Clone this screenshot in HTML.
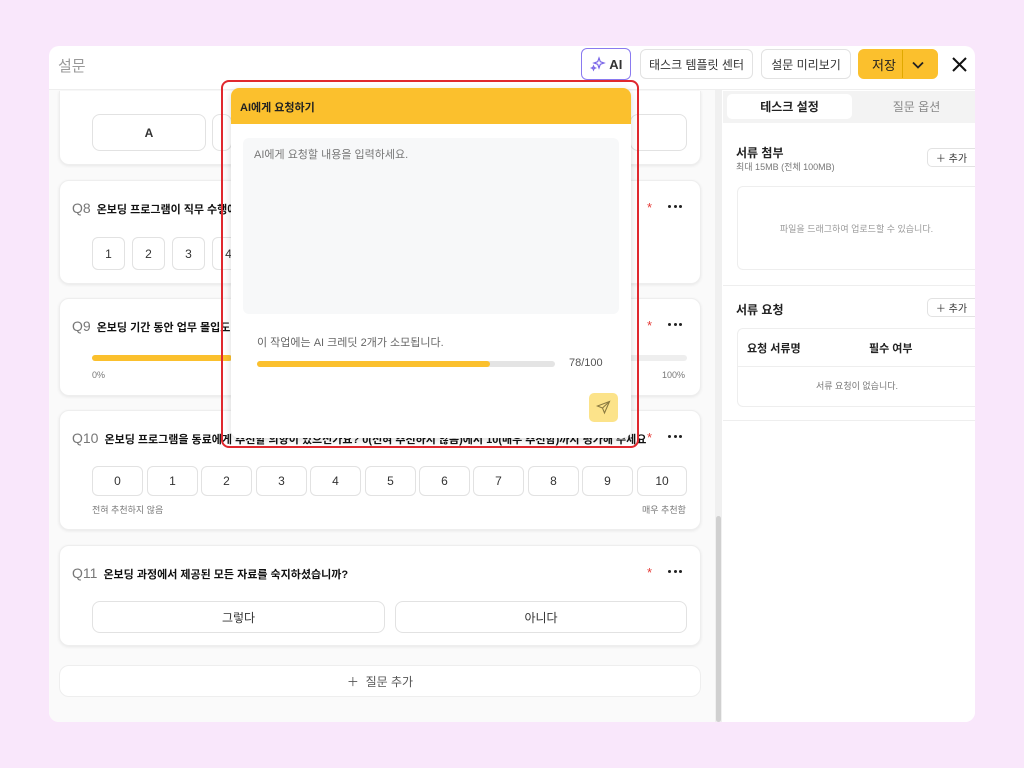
<!DOCTYPE html>
<html><head><meta charset="utf-8"><style>
*{box-sizing:border-box;margin:0;padding:0}
body{width:1024px;height:768px;background:#f9e7fb;font-family:"Liberation Sans","Noto Sans CJK KR",sans-serif;position:relative;overflow:hidden;color:#222}
.abs{position:absolute}
.card{position:absolute;background:#fff;border-radius:10px;box-shadow:0 1px 3px rgba(0,0,0,.08);border:1px solid #eee}
.btn{position:absolute;border:1px solid #e2e2e2;border-radius:6px;background:#fff;display:flex;align-items:center;justify-content:center;font-size:12px;color:#333}
.q{position:absolute;font-size:11px;font-weight:bold;color:#111;white-space:nowrap}
.q b{font-weight:normal;color:#777;font-size:14px;margin-right:6px}
.star{position:absolute;color:#e53935;font-size:13px}
.dots{position:absolute;width:14px;height:4px;display:flex;justify-content:space-between}
.dots i{width:3px;height:3px;border-radius:50%;background:#222;display:block}
.sm{position:absolute;font-size:9px;color:#777}
</style></head><body>
<div class="abs" style="left:49px;top:46px;width:926px;height:676px;background:#fff;border-radius:10px;overflow:hidden">
 <div class="abs" style="left:0;top:44px;width:666px;height:632px;background:#fafafa"></div>
 <div class="abs" style="left:666px;top:44px;width:7px;height:632px;background:#f0f0f0"></div>
 <div class="abs" style="left:667px;top:470px;width:5px;height:206px;background:#d0d0d0;border-radius:3px"></div>
 <div class="abs" style="left:673px;top:44px;width:253px;height:632px;background:#fff"></div>
 <div class="abs" style="left:0;top:43px;width:926px;height:1px;background:#eee"></div>
</div>
<div class="abs" style="left:58px;top:55px;font-size:15px;color:#999">설문</div>
<div class="btn" style="left:581px;top:48px;width:50px;height:32px;border:1.5px solid #8a7af0;font-weight:bold;font-size:13px"><svg width="16" height="16" viewBox="0 0 16 16" fill="none" stroke="#7a66e8" stroke-width="1.2"><path d="M9 2l1.3 3.7L14 7l-3.7 1.3L9 12l-1.3-3.7L4 7l3.7-1.3z"/><path d="M3.5 10l.6 1.4 1.4.6-1.4.6-.6 1.4-.6-1.4-1.4-.6 1.4-.6z"/></svg>&nbsp;AI</div>
<div class="btn" style="left:640px;top:49px;width:113px;height:30px">태스크 템플릿 센터</div>
<div class="btn" style="left:761px;top:49px;width:90px;height:30px">설문 미리보기</div>
<div class="btn" style="left:858px;top:49px;width:80px;height:30px;background:#fbc02d;border-color:#fbc02d;color:#222">
 <span style="position:absolute;left:13px;font-size:13px">저장</span>
 <span style="position:absolute;left:43px;top:0;width:1px;height:28px;background:#e0a800"></span>
 <svg class="abs" style="left:52px;top:8px" width="14" height="14" viewBox="0 0 14 14"><path d="M2 4.5l5 5 5-5" stroke="#222" stroke-width="1.8" fill="none"/></svg></div>
<svg class="abs" style="left:952px;top:57px" width="15" height="15" viewBox="0 0 15 15"><path d="M1 1l13 13M14 1L1 14" stroke="#111" stroke-width="2"/></svg>

<!-- left cards -->
<div class="card" style="left:59px;top:91px;width:642px;height:74px;border-top:none;border-radius:0 0 10px 10px"></div>
<div class="btn" style="left:92px;top:114px;width:114px;height:37px;border-radius:8px;font-weight:bold">A</div>
<div class="btn" style="left:212px;top:114px;width:20px;height:37px;border-radius:8px"></div>
<div class="btn" style="left:630px;top:114px;width:57px;height:37px;border-radius:8px"></div>

<div class="card" style="left:59px;top:180px;width:642px;height:104px"></div>
<div class="q" style="left:72px;top:200px"><b>Q8</b>온보딩 프로그램이 직무 수행에</div>
<div class="star" style="left:647px;top:200px">*</div><div class="dots" style="left:668px;top:205px"><i></i><i></i><i></i></div>
<div class="btn" style="left:92px;top:237px;width:33px;height:33px;font-size:12px">1</div>
<div class="btn" style="left:132px;top:237px;width:33px;height:33px">2</div>
<div class="btn" style="left:172px;top:237px;width:33px;height:33px">3</div>
<div class="btn" style="left:212px;top:237px;width:33px;height:33px">4</div>

<div class="card" style="left:59px;top:298px;width:642px;height:98px"></div>
<div class="q" style="left:72px;top:318px"><b>Q9</b>온보딩 기간 동안 업무 몰입도</div>
<div class="star" style="left:647px;top:318px">*</div><div class="dots" style="left:668px;top:323px"><i></i><i></i><i></i></div>
<div class="abs" style="left:92px;top:355px;width:595px;height:6px;background:#eee;border-radius:3px"></div>
<div class="abs" style="left:92px;top:355px;width:140px;height:6px;background:#fbc02d;border-radius:3px"></div>
<div class="sm" style="left:92px;top:370px">0%</div><div class="sm" style="left:662px;top:370px">100%</div>

<div class="card" style="left:59px;top:410px;width:642px;height:120px"></div>
<div class="q" style="left:72px;top:430px"><b>Q10</b>온보딩 프로그램을 동료에게 추천할 의향이 있으신가요? 0(전혀 추천하지 않음)에서 10(매우 추천함)까지 평가해 주세요</div>
<div class="star" style="left:647px;top:430px">*</div><div class="dots" style="left:668px;top:435px"><i></i><i></i><i></i></div>
<div class="btn" style="left:92px;top:466px;width:51px;height:30px">0</div>
<div class="btn" style="left:147px;top:466px;width:51px;height:30px">1</div>
<div class="btn" style="left:201px;top:466px;width:51px;height:30px">2</div>
<div class="btn" style="left:256px;top:466px;width:51px;height:30px">3</div>
<div class="btn" style="left:310px;top:466px;width:51px;height:30px">4</div>
<div class="btn" style="left:365px;top:466px;width:51px;height:30px">5</div>
<div class="btn" style="left:419px;top:466px;width:51px;height:30px">6</div>
<div class="btn" style="left:473px;top:466px;width:51px;height:30px">7</div>
<div class="btn" style="left:528px;top:466px;width:51px;height:30px">8</div>
<div class="btn" style="left:582px;top:466px;width:51px;height:30px">9</div>
<div class="btn" style="left:637px;top:466px;width:50px;height:30px">10</div>
<div class="sm" style="left:92px;top:503px">전혀 추천하지 않음</div><div class="sm" style="left:642px;top:503px">매우 추천함</div>

<div class="card" style="left:59px;top:545px;width:642px;height:101px"></div>
<div class="q" style="left:72px;top:565px"><b>Q11</b>온보딩 과정에서 제공된 모든 자료를 숙지하셨습니까?</div>
<div class="star" style="left:647px;top:565px">*</div><div class="dots" style="left:668px;top:570px"><i></i><i></i><i></i></div>
<div class="btn" style="left:92px;top:601px;width:293px;height:32px;border-radius:8px">그렇다</div>
<div class="btn" style="left:395px;top:601px;width:292px;height:32px;border-radius:8px">아니다</div>

<div class="card" style="left:59px;top:665px;width:642px;height:32px;box-shadow:none;display:flex;align-items:center;justify-content:center;font-size:12px;color:#555">＋&nbsp; 질문 추가</div>

<!-- right panel -->
<div class="abs" style="left:723px;top:91px;width:252px;height:32px;background:#f3f3f3"></div>
<div class="abs" style="left:727px;top:94px;width:125px;height:25px;background:#fff;border-radius:5px;font-size:12px;font-weight:bold;display:flex;align-items:center;justify-content:center">테스크 설정</div>
<div class="abs" style="left:858px;top:94px;width:117px;height:25px;font-size:12px;color:#888;display:flex;align-items:center;justify-content:center">질문 옵션</div>
<div class="abs" style="left:736px;top:144px;font-size:12px;font-weight:bold">서류 첨부</div>
<div class="sm" style="left:736px;top:160px;color:#777">최대 15MB (전체 100MB)</div>
<div class="btn" style="left:927px;top:148px;width:48px;height:19px;font-size:10px;border-radius:5px 0 0 5px;border-right:none">＋ 추가</div>
<div class="abs" style="left:737px;top:186px;width:238px;height:84px;border:1px solid #eee;border-right:none;border-radius:6px 0 0 6px;font-size:9px;color:#999;display:flex;align-items:center;justify-content:center">파일을 드래그하여 업로드할 수 있습니다.</div>
<div class="abs" style="left:723px;top:285px;width:252px;height:1px;background:#eee"></div>
<div class="abs" style="left:736px;top:301px;font-size:12px;font-weight:bold">서류 요청</div>
<div class="btn" style="left:927px;top:298px;width:48px;height:19px;font-size:10px;border-radius:5px 0 0 5px;border-right:none">＋ 추가</div>
<div class="abs" style="left:737px;top:328px;width:238px;height:79px;border:1px solid #eee;border-right:none;border-radius:6px 0 0 6px"></div>
<div class="abs" style="left:737px;top:366px;width:238px;height:1px;background:#eee"></div>
<div class="abs" style="left:747px;top:340px;font-size:11px;font-weight:bold">요청 서류명</div>
<div class="abs" style="left:869px;top:340px;font-size:11px;font-weight:bold">필수 여부</div>
<div class="abs" style="left:737px;top:379px;width:240px;text-align:center;font-size:9px;color:#777">서류 요청이 없습니다.</div>
<div class="abs" style="left:723px;top:420px;width:252px;height:1px;background:#eee"></div>

<!-- popup -->
<div class="abs" style="left:231px;top:88px;width:400px;height:350px;background:#fff;border-radius:8px;box-shadow:0 2px 8px rgba(0,0,0,.15)"></div>
<div class="abs" style="left:231px;top:88px;width:400px;height:36px;background:#fbc02d;border-radius:8px 8px 0 0;font-size:11px;font-weight:bold;padding:11px 0 0 9px">AI에게 요청하기</div>
<div class="abs" style="left:243px;top:138px;width:376px;height:176px;background:#f7f8f9;border-radius:6px;font-size:11px;color:#777;padding:8px 11px">AI에게 요청할 내용을 입력하세요.</div>
<div class="abs" style="left:257px;top:334px;font-size:11px;color:#666">이 작업에는 AI 크레딧 2개가 소모됩니다.</div>
<div class="abs" style="left:257px;top:361px;width:298px;height:6px;background:#e4e4e4;border-radius:3px"></div>
<div class="abs" style="left:257px;top:361px;width:233px;height:6px;background:#fbc02d;border-radius:3px"></div>
<div class="abs" style="left:569px;top:357px;font-size:11px;color:#555">78/100</div>
<div class="abs" style="left:589px;top:393px;width:29px;height:29px;background:#fce38a;border-radius:5px"><svg class="abs" style="left:7px;top:7px" width="15" height="15" viewBox="0 0 15 15" fill="none" stroke="#8a7a40" stroke-width="1.1"><path d="M13.5 1.5L1.5 6l5 2 2 5z"/><path d="M6.5 8l7-6.5"/></svg></div>
<div class="abs" style="left:221px;top:80px;width:418px;height:368px;border:2.5px solid #e0282e;border-radius:8px"></div>
</body></html>
